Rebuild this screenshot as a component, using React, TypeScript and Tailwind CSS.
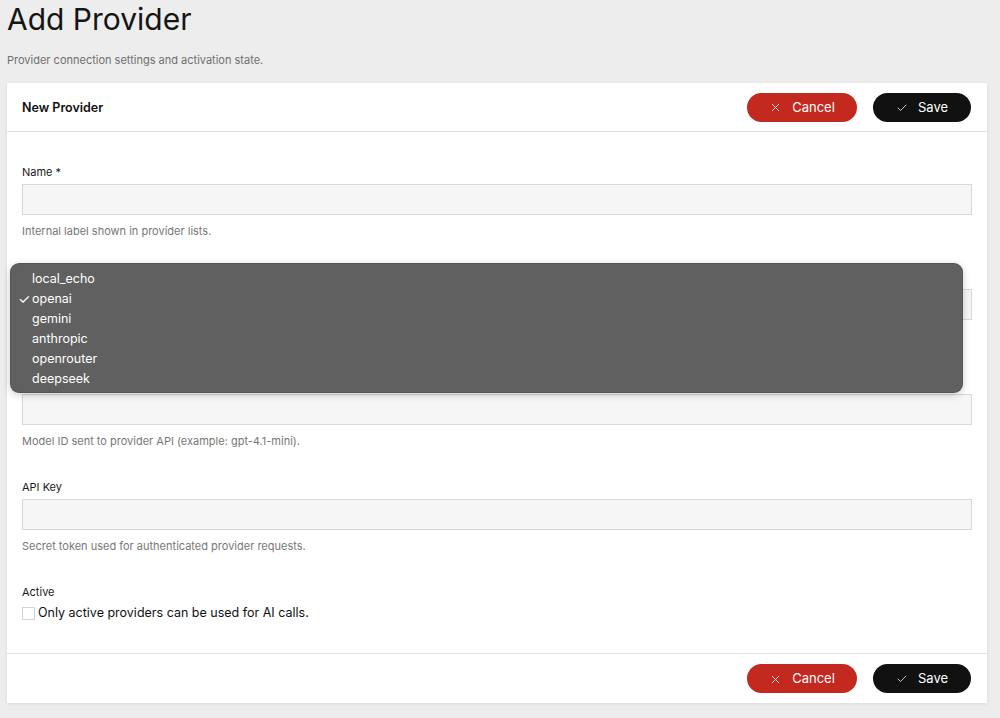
import { X, Check } from 'lucide-react';

const providers = ['local_echo', 'openai', 'gemini', 'anthropic', 'openrouter', 'deepseek'];

function Actions() {
  return (
    <div className="flex items-center gap-4">
      <button className="flex h-[29px] w-[110px] items-center justify-center gap-[10px] rounded-full bg-[#c3291f] pt-px text-[13px] text-white">
        <X size={13} strokeWidth={1.5} />
        <span>Cancel</span>
      </button>
      <button className="flex h-[29px] w-[98px] items-center justify-center gap-[10px] rounded-full bg-[#111111] pt-px text-[13px] text-white">
        <Check size={12} strokeWidth={1.5} />
        <span>Save</span>
      </button>
    </div>
  );
}

function Field({ label, help, children }: { label: string; help: string; children: React.ReactNode }) {
  return (
    <div className="mb-[30px]">
      <label className="block text-[11px] leading-4 text-[#1a1a1a]">{label}</label>
      <div className="mt-1">{children}</div>
      <p className="mt-[8px] text-[11px] leading-4 text-[#777777]">{help}</p>
    </div>
  );
}

export default function App() {
  return (
    <div className="relative min-h-screen bg-[#ededed] px-[7px] font-['Inter',sans-serif] text-[#111111]">
      <h1 className="pt-[2px] text-[30px] leading-[34px] text-[#151515]">Add Provider</h1>
      <p className="mt-[16px] text-[11px] leading-4 text-[#6f6f6f]">Provider connection settings and activation state.</p>

      <div className="mt-[15px] w-[980px] bg-white shadow-[0_1px_4px_rgba(0,0,0,0.08)]">
        {/* Header */}
        <div className="flex h-[49px] items-center justify-between border-b border-[#e3e3e3] pl-[15px] pr-[16px]">
          <h2 className="pt-[3px] text-[12.5px] font-semibold">New Provider</h2>
          <Actions />
        </div>

        {/* Form */}
        <div className="px-[15px] pt-[32px]">
          <Field label="Name *" help="Internal label shown in provider lists.">
            <input className="block h-[31px] w-[950px] border border-[#d8d8d8] bg-[#f6f6f6]" />
          </Field>
          <Field label="Provider Type *" help="Adapter used to talk to the provider backend.">
            <div className="flex h-[31px] w-[950px] items-center justify-between border border-[#d8d8d8] bg-[#f6f6f6] px-2 text-[12.5px]">
              <span>openai</span>
              <span className="text-[10px] leading-none">⇕</span>
            </div>
          </Field>
          <Field label="Model *" help="Model ID sent to provider API (example: gpt-4.1-mini).">
            <input className="block h-[31px] w-[950px] border border-[#d8d8d8] bg-[#f6f6f6]" />
          </Field>
          <Field label="API Key" help="Secret token used for authenticated provider requests.">
            <input className="block h-[31px] w-[950px] border border-[#d8d8d8] bg-[#f6f6f6]" />
          </Field>
          <div className="pb-[32px]">
            <label className="block text-[11px] leading-4 text-[#1a1a1a]">Active</label>
            <div className="mt-[5px] flex items-center gap-[3px]">
              <span className="h-[13px] w-[13px] border border-[#d4d4d4] bg-white" />
              <span className="text-[12.5px] leading-4">Only active providers can be used for AI calls.</span>
            </div>
          </div>
        </div>

        {/* Footer */}
        <div className="flex justify-end border-t border-[#e3e3e3] py-[10px] pr-[16px]">
          <Actions />
        </div>
      </div>
      <div className="h-[15px]" />

      {/* Native select popup */}
      <div className="absolute left-[11px] top-[264px] w-[951px] rounded-lg bg-[#606060] pt-[5px] pb-[3px] shadow-[0_2px_8px_rgba(0,0,0,0.25)] ring-1 ring-[#555555]">
        {providers.map((p) => (
          <div key={p} className="relative h-5 pl-[21px] text-[12.5px] leading-5 text-white">
            {p === 'openai' && <span className="absolute left-[7px] top-0 text-[14px]">✓</span>}
            {p}
          </div>
        ))}
      </div>
    </div>
  );
}
